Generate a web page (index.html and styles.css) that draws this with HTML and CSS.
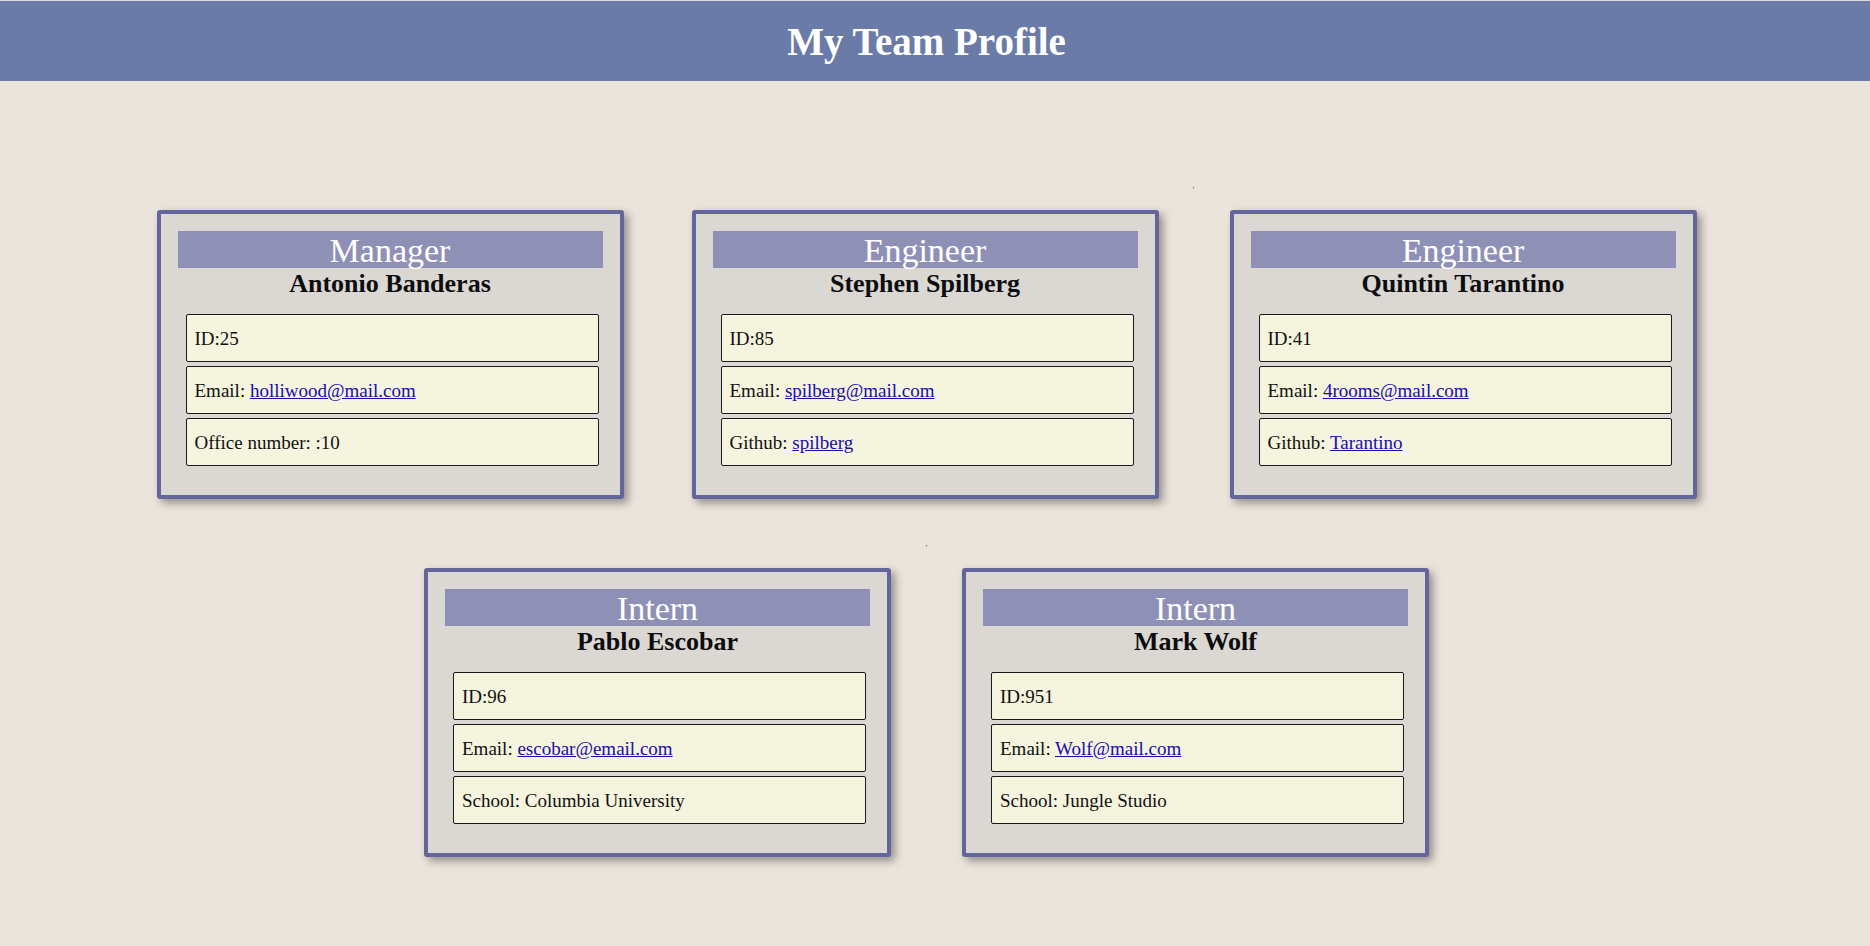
FILE: index.html
```html
<!DOCTYPE html>
<html lang="en">
<head>
<meta charset="utf-8">
<title>My Team Profile</title>
<link rel="stylesheet" href="styles.css">
</head>
<body>
<header class="top">
  <h1 class="top-title">My Team Profile</h1>
</header>
<main class="team">
  <div class="team-row">
    <section class="card gap-a">
      <h2 class="card-role">Manager</h2>
      <h3 class="card-name">Antonio Banderas</h3>
      <ul class="info">
        <li class="info-item">ID:25</li>
        <li class="info-item">Email: <a href="#">holliwood@mail.com</a></li>
        <li class="info-item">Office number: :10</li>
      </ul>
    </section>
    <section class="card gap-b">
      <h2 class="card-role">Engineer</h2>
      <h3 class="card-name">Stephen Spilberg</h3>
      <ul class="info">
        <li class="info-item">ID:85</li>
        <li class="info-item">Email: <a href="#">spilberg@mail.com</a></li>
        <li class="info-item">Github: <a href="#">spilberg</a></li>
      </ul>
    </section>
    <span class="stray">,</span>
    <section class="card">
      <h2 class="card-role">Engineer</h2>
      <h3 class="card-name">Quintin Tarantino</h3>
      <ul class="info">
        <li class="info-item">ID:41</li>
        <li class="info-item">Email: <a href="#">4rooms@mail.com</a></li>
        <li class="info-item">Github: <a href="#">Tarantino</a></li>
      </ul>
    </section>
  </div>
  <div class="row-sep">,</div>
  <div class="team-row">
    <section class="card gap-c">
      <h2 class="card-role">Intern</h2>
      <h3 class="card-name">Pablo Escobar</h3>
      <ul class="info">
        <li class="info-item">ID:96</li>
        <li class="info-item">Email: <a href="#">escobar@email.com</a></li>
        <li class="info-item">School: Columbia University</li>
      </ul>
    </section>
    <section class="card">
      <h2 class="card-role">Intern</h2>
      <h3 class="card-name">Mark Wolf</h3>
      <ul class="info">
        <li class="info-item">ID:951</li>
        <li class="info-item">Email: <a href="#">Wolf@mail.com</a></li>
        <li class="info-item">School: Jungle Studio</li>
      </ul>
    </section>
  </div>
</main>
</body>
</html>
```
FILE: styles.css
```css
* {
  box-sizing: border-box;
}

html, body {
  margin: 0;
  padding: 0;
}

body {
  background: #ebe4dc;
  font-family: "Liberation Serif", "Times New Roman", serif;
  color: #111;
  min-height: 946px;
}

.top {
  background: #6a7ba8;
  border-top: 1px solid #d9d9dc;
  height: 81px;
  display: flex;
  align-items: center;
  justify-content: center;
  padding-right: 17px;
}

.top-title {
  margin: 0;
  color: #ffffff;
  font-size: 39px;
  font-weight: bold;
  line-height: 45px;
}

.team {
  padding: 129px 17px 40px 0;
}

.team-row {
  display: flex;
  justify-content: center;
  align-items: flex-start;
}

.card {
  width: 467px;
  background: #dbd8d4;
  border: 4px solid #64669b;
  border-radius: 3px;
  box-shadow: 4px 4px 9px rgba(0, 0, 0, 0.38);
  padding: 17px 21px 29px 25px;
  display: flex;
  flex-direction: column;
}

.gap-a {
  margin-right: 68px;
}

.gap-b {
  margin-right: 34px;
}

.gap-c {
  margin-right: 71px;
}

.stray {
  width: 3px;
  margin-right: 34px;
  margin-top: -28px;
  font-size: 8px;
  line-height: 8px;
  color: #444;
}

.row-sep {
  text-align: center;
  font-size: 8px;
  line-height: 6px;
  height: 6px;
  color: #444;
  margin: 42px 0 21px;
}

.card-role {
  margin: 0 -4px 0 -8px;
  background: #8f90b6;
  color: #ffffff;
  font-weight: normal;
  font-size: 34px;
  line-height: 37px;
  height: 37px;
  padding-top: 1px;
  text-align: center;
}

.card-name {
  margin: 1px -4px 15px -8px;
  font-size: 26px;
  line-height: 30px;
  font-weight: bold;
  text-align: center;
  color: #0d0d0d;
}

.info {
  list-style: none;
  margin: 0;
  padding: 0;
  display: flex;
  flex-direction: column;
  gap: 4px;
}

.info-item {
  height: 48px;
  background: #f5f4de;
  border: 1px solid #1a1a1a;
  border-radius: 2px;
  padding: 13px 8px 11px;
  font-size: 19px;
  line-height: 22px;
  color: #111;
}

.info-item a {
  color: #1a0dab;
  text-decoration: underline;
}
```
